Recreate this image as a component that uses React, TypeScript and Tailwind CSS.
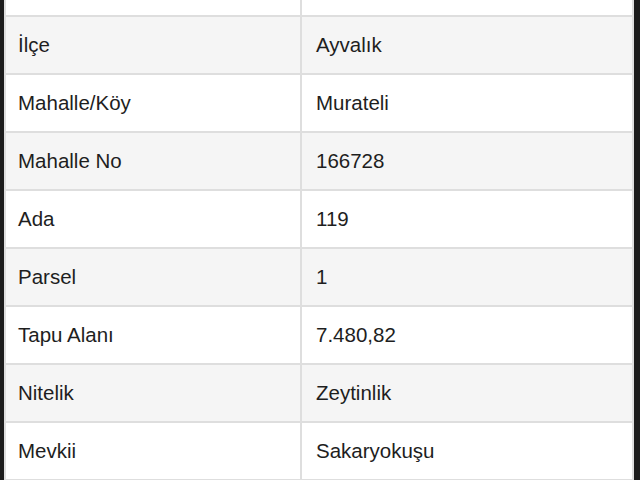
const rows: [string, string][] = [
  ['İlçe', 'Ayvalık'],
  ['Mahalle/Köy', 'Murateli'],
  ['Mahalle No', '166728'],
  ['Ada', '119'],
  ['Parsel', '1'],
  ['Tapu Alanı', '7.480,82'],
  ['Nitelik', 'Zeytinlik'],
  ['Mevkii', 'Sakaryokuşu'],
];

export default function App() {
  return (
    <div className="h-[480px] w-[640px] overflow-hidden bg-[#1c1c1c] pl-[4px] font-['Liberation_Sans',Arial,sans-serif] text-[20.5px] text-[#1e1e1e]">
      <div className="w-[630px] border-x-2 border-[#dedede] bg-white">
        {/* row cut off at the top */}
        <div className="grid h-[17px] grid-cols-[296px_1fr] border-b-2 border-[#dedede]">
          <div className="border-r-2 border-[#dedede]" />
          <div />
        </div>
        {rows.map(([label, value], i) => (
          <div
            key={label}
            className={`grid h-[58px] grid-cols-[296px_1fr] border-b-2 border-[#dedede] ${i % 2 === 0 ? 'bg-[#f5f5f5]' : 'bg-white'}`}
          >
            <div className="flex items-center border-r-2 border-[#dedede] pl-[12px]">{label}</div>
            <div className="flex items-center pl-[14px]">{value}</div>
          </div>
        ))}
      </div>
    </div>
  );
}
